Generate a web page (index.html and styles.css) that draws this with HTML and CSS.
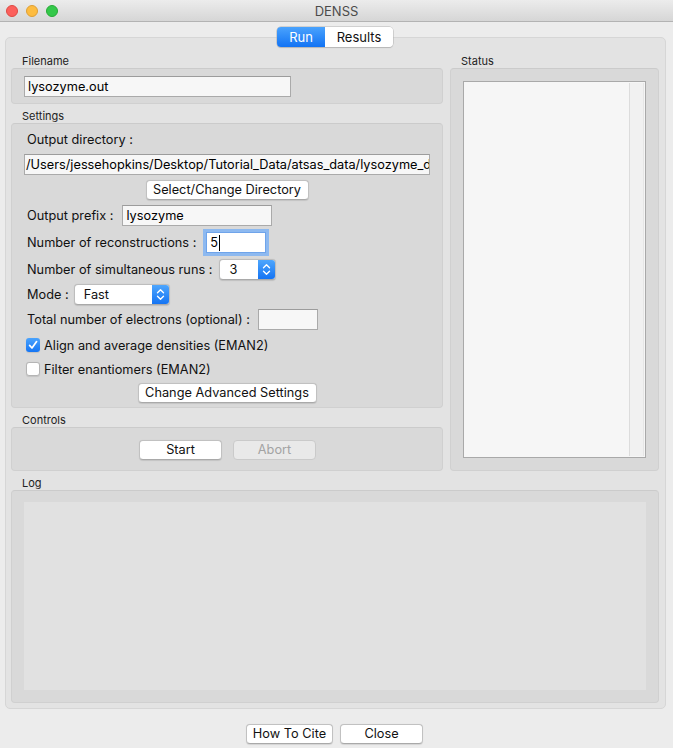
FILE: index.html
```html
<!DOCTYPE html>
<html lang="en">
<head>
<meta charset="utf-8">
<title>DENSS</title>
<link rel="stylesheet" href="styles.css">
</head>
<body>
  <header class="titlebar">
    <div class="lights">
      <span class="light red"></span>
      <span class="light yellow"></span>
      <span class="light green"></span>
    </div>
    <div class="title">DENSS</div>
    <div></div>
  </header>

  <nav class="tabs">
    <div class="seg">
      <span class="seg-item active">Run</span>
      <span class="seg-item">Results</span>
    </div>
  </nav>

  <main class="pane">
    <div class="top">
      <div class="col-left">
        <div class="group-label">Filename</div>
        <section class="box box-file">
          <div class="field w-file">lysozyme.out</div>
        </section>

        <div class="group-label">Settings</div>
        <section class="box box-settings">
          <div class="lbl-row">Output directory :</div>
          <div class="field w-path">/Users/jessehopkins/Desktop/Tutorial_Data/atsas_data/lysozyme_d</div>
          <button class="btn w-dir">Select/Change Directory</button>

          <div class="row r-prefix">
            <span class="lbl">Output prefix :</span>
            <div class="field w-prefix">lysozyme</div>
          </div>
          <div class="row r-recon">
            <span class="lbl">Number of reconstructions :</span>
            <div class="field focused w-recon">5<span class="caret"></span></div>
          </div>
          <div class="row r-runs">
            <span class="lbl">Number of simultaneous runs :</span>
            <div class="select w-runs">
              <span class="val">3</span>
              <span class="step"><svg width="9" height="13" viewBox="0 0 9 13"><path d="M1.5 4.8 L4.5 1.8 L7.5 4.8 M1.5 8.2 L4.5 11.2 L7.5 8.2" fill="none" stroke="#fff" stroke-width="1.4" stroke-linecap="round" stroke-linejoin="round"/></svg></span>
            </div>
          </div>
          <div class="row r-mode">
            <span class="lbl">Mode :</span>
            <div class="select w-mode">
              <span class="val">Fast</span>
              <span class="step"><svg width="9" height="13" viewBox="0 0 9 13"><path d="M1.5 4.8 L4.5 1.8 L7.5 4.8 M1.5 8.2 L4.5 11.2 L7.5 8.2" fill="none" stroke="#fff" stroke-width="1.4" stroke-linecap="round" stroke-linejoin="round"/></svg></span>
            </div>
          </div>
          <div class="row r-elec">
            <span class="lbl">Total number of electrons (optional) :</span>
            <div class="field w-elec"></div>
          </div>

          <label class="check r-check1">
            <span class="cb checked"><svg width="14" height="14" viewBox="0 0 14 14"><path d="M3.6 7.4 L6 10 L10.6 3.6" fill="none" stroke="#fff" stroke-width="1.7" stroke-linecap="round" stroke-linejoin="round"/></svg></span>
            <span>Align and average densities (EMAN2)</span>
          </label>
          <label class="check r-check2">
            <span class="cb"></span>
            <span>Filter enantiomers (EMAN2)</span>
          </label>

          <button class="btn w-adv">Change Advanced Settings</button>
        </section>

        <div class="group-label">Controls</div>
        <section class="box box-controls">
          <button class="btn w-ctl">Start</button>
          <button class="btn w-ctl disabled">Abort</button>
        </section>
      </div>

      <div class="col-right">
        <div class="group-label">Status</div>
        <section class="box box-status">
          <div class="textarea">
            <div class="ta-body"></div>
            <div class="ta-track"></div>
          </div>
        </section>
      </div>
    </div>

    <div class="group-label">Log</div>
    <section class="box box-log">
      <div class="log-area"></div>
    </section>
  </main>

  <footer class="bottom">
    <button class="btn w-cite">How To Cite</button>
    <button class="btn w-close">Close</button>
  </footer>
</body>
</html>
```

FILE: styles.css
```css
* { box-sizing: border-box; }

html, body { margin: 0; padding: 0; }

body {
  width: 673px;
  height: 748px;
  overflow: hidden;
  background: #ececec;
  font-family: Inter, "Liberation Sans", "DejaVu Sans", sans-serif;
  font-size: 12.75px;
  color: #111;
}

/* window title bar */
.titlebar {
  height: 22px;
  display: grid;
  grid-template-columns: 1fr auto 1fr;
  align-items: center;
  background: linear-gradient(#ececec, #d6d6d6);
  border-bottom: 1px solid #b3b3b3;
}

.lights { display: flex; gap: 8px; padding-left: 6px; }

.light {
  width: 12px;
  height: 12px;
  border-radius: 50%;
}
.light.red { background: #fc605c; border: 0.5px solid #de4a43; }
.light.yellow { background: #fdbc40; border: 0.5px solid #de9f34; }
.light.green { background: #34c84a; border: 0.5px solid #27aa35; }

.title { color: #4b4b4b; font-size: 13px; line-height: 16px; }

/* segmented tab control */
.tabs {
  display: flex;
  justify-content: center;
  margin-top: 5px;
  height: 20px;
  position: relative;
  z-index: 1;
  padding-right: 3px;
}

.seg {
  display: flex;
  border-radius: 4px;
  overflow: hidden;
  box-shadow: 0 0 0 0.5px #b4b4b4, 0 1px 1px rgba(0, 0, 0, 0.18);
}

.seg-item {
  width: 68px;
  height: 20px;
  line-height: 20px;
  text-align: center;
  background: #fff;
  color: #111;
  font-size: 13px;
}

.seg-item.active {
  width: 48px;
  color: #fff;
  background: linear-gradient(#4aa3fd, #1273f4);
}

/* tab page */
.pane {
  margin: -10px 7px 0 5px;
  height: 672px;
  background: #e3e3e3;
  border: 1px solid #d6d6d6;
  border-radius: 5px;
  padding: 11px 6px 5px 5px;
  display: flex;
  flex-direction: column;
}

.top { display: flex; gap: 7px; }

.col-left { width: 432px; display: flex; flex-direction: column; }
.col-right { flex: 1; display: flex; flex-direction: column; }

.group-label {
  height: 19px;
  padding: 5px 0 0 11px;
  font-size: 11px;
  line-height: 14px;
  color: #222;
}

.box {
  background: #d9d9d9;
  border: 1px solid #d0d0d0;
  border-top-color: #cbcbcb;
  border-radius: 4px;
}

.box-file { height: 36px; padding: 7px 12px; }

.box-settings {
  height: 285px;
  padding: 0 12px;
  display: flex;
  flex-direction: column;
}

.box-controls {
  height: 44px;
  padding-top: 12px;
  display: flex;
  justify-content: center;
  gap: 11px;
  padding-left: 1px;
}

.box-status { flex: 1; padding: 12px; display: flex; }

.box-log { flex: 1; padding: 11px 12px 12px; display: flex; }

/* text fields */
.field {
  height: 21px;
  background: #f7f7f7;
  border: 1px solid #aaaaaa;
  border-top-color: #9c9c9c;
  padding: 0 3px;
  line-height: 19px;
  white-space: nowrap;
  overflow: hidden;
  color: #000;
}

.w-file { width: 267px; }
.w-path { width: 406px; padding-left: 1px; margin-top: 6px; }
.w-prefix { width: 150px; }
.w-recon { width: 60px; background: #fff; }
.w-elec { width: 60px; }

.field.focused {
  border-color: #6fa4ea;
  box-shadow: 0 0 0 3px #8db9f0;
  overflow: visible;
  display: flex;
  align-items: center;
}

.caret {
  display: inline-block;
  width: 1px;
  height: 16px;
  background: #000;
  margin-left: 1px;
}

/* settings rows */
.lbl-row { height: 16px; line-height: 16px; margin-top: 8px; padding-left: 3px; }

.row { display: flex; align-items: center; height: 21px; }
.lbl { padding-left: 3px; padding-right: 9px; white-space: nowrap; }

.r-prefix { margin-top: 5px; }
.r-recon { margin-top: 6px; }
.r-recon .lbl { padding-right: 10px; }
.r-runs { margin-top: 6px; }
.r-runs .lbl { padding-right: 7px; }
.r-mode { margin-top: 4px; }
.r-mode .lbl { padding-right: 5px; }
.r-elec { margin-top: 4px; }
.r-elec .lbl { padding-right: 8px; }

/* popup buttons */
.select {
  display: flex;
  height: 21px;
  background: #fff;
  border: 1px solid #bdbdbd;
  border-bottom-color: #a9a9a9;
  border-radius: 4px;
  box-shadow: 0 0.5px 1px rgba(0, 0, 0, 0.12);
  overflow: hidden;
}
.select .val { flex: 1; padding-left: 9px; line-height: 19px; }
.select .step {
  width: 17px;
  background: linear-gradient(#4ea6fd, #1574f3);
  display: flex;
  align-items: center;
  justify-content: center;
}
.w-runs { width: 57px; }
.w-mode { width: 96px; }

/* check boxes */
.check { display: flex; align-items: center; height: 14px; gap: 4px; padding-left: 2px; }
.r-check1 { margin-top: 8px; }
.r-check2 { margin-top: 10px; }

.cb {
  width: 14px;
  height: 14px;
  border-radius: 3px;
  background: #fff;
  border: 1px solid #b5b5b5;
  box-shadow: 0 0.5px 1px rgba(0, 0, 0, 0.1);
  display: block;
}
.cb svg { display: block; }
.cb.checked {
  border: none;
  background: linear-gradient(#4aa3fd, #1475f4);
}

/* push buttons */
.btn {
  height: 20px;
  padding: 0;
  font-family: inherit;
  font-size: 12.75px;
  line-height: 18px;
  color: #111;
  text-align: center;
  background: #fff;
  border: 1px solid #c1c1c1;
  border-bottom-color: #a9a9a9;
  border-radius: 4px;
  box-shadow: 0 0.5px 1px rgba(0, 0, 0, 0.1);
}

.btn.disabled {
  background: #e9e9e9;
  color: #a3a3a3;
  border-color: #cacaca;
  box-shadow: none;
}

.w-dir { width: 163px; align-self: center; margin-top: 5px; }
.w-adv { width: 179px; align-self: center; margin-top: 7px; }
.w-ctl { width: 83px; }
.w-cite { width: 87px; }
.w-close { width: 83px; }

/* status text area */
.textarea {
  flex: 1;
  display: flex;
  background: #f6f6f6;
  border: 1px solid #a9a9a9;
  padding: 1px 1px 1px 0;
}
.ta-body { flex: 1; }
.ta-track {
  width: 15px;
  background: #f1f1f1;
  border-left: 1px solid #dcdcdc;
  border-right: 1px solid #e6e6e6;
}

/* log area */
.log-area { flex: 1; background: #e1e1e1; }

/* dialog buttons */
.bottom {
  display: flex;
  justify-content: center;
  gap: 7px;
  margin-top: 15px;
  padding-right: 4px;
}
```
